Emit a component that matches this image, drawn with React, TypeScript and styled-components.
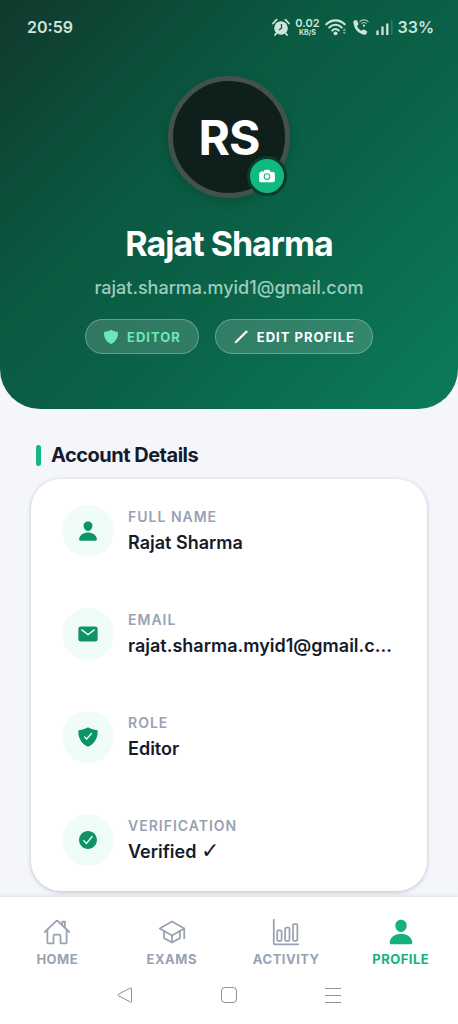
import React from "react";
import styled, { createGlobalStyle } from "styled-components";
import {
  IoBarChartOutline,
  IoCamera,
  IoCheckmarkCircle,
  IoHomeOutline,
  IoMail,
  IoPerson,
  IoSchoolOutline,
  IoShield,
  IoShieldCheckmark,
} from "react-icons/io5";

const GlobalStyle = createGlobalStyle`
  *, *::before, *::after { box-sizing: border-box; }
  body {
    margin: 0;
    background: #f4f6fb;
    color: #151b2b;
    font-family: Inter, "Liberation Sans", "DejaVu Sans", sans-serif;
  }
  h1, h2, p, dl, dt, dd { margin: 0; }
  button { font: inherit; cursor: pointer; }
  svg { display: block; flex: none; }
`;

const Screen = styled.div`
  display: flex;
  flex-direction: column;
  min-height: 100vh;
`;

const Hero = styled.header`
  display: flex;
  flex-direction: column;
  align-items: center;
  padding-bottom: 55px;
  border-radius: 0 0 40px 40px;
  background: linear-gradient(135deg, #10392d 0%, #0a5a42 38%, #0a6348 60%, #0c7c59 100%);
`;

const StatusBar = styled.div`
  display: flex;
  align-items: center;
  justify-content: space-between;
  align-self: stretch;
  height: 54px;
  padding: 0 24px 0 27px;
  color: #cfe5da;
  font-size: 16px;
  font-weight: 600;
`;

const StatusIcons = styled.div`
  display: flex;
  align-items: center;
  gap: 5px;
`;

const DataRate = styled.div`
  display: flex;
  flex-direction: column;
  align-items: center;
  font-size: 11px;
  line-height: 12px;
`;

const DataUnit = styled.span`
  font-size: 7px;
  line-height: 8px;
  font-weight: 700;
`;

const Avatar = styled.div`
  position: relative;
  display: flex;
  align-items: center;
  justify-content: center;
  width: 122px;
  height: 122px;
  margin-top: 22px;
  border: 5px solid #41524c;
  border-radius: 50%;
  background: #0f1f1b;
  box-shadow: 0 4px 12px rgba(0, 0, 0, 0.16);
  color: #fff;
  font-size: 48px;
  font-weight: 700;
  letter-spacing: -1px;
`;

const CameraButton = styled.button`
  position: absolute;
  right: -2px;
  bottom: -3px;
  display: flex;
  align-items: center;
  justify-content: center;
  width: 40px;
  height: 40px;
  padding: 0;
  border: 3px solid #0b3a2d;
  border-radius: 50%;
  background: #10b981;
  color: #fff;
`;

const Name = styled.h1`
  margin-top: 26px;
  color: #fff;
  font-size: 34px;
  line-height: 40px;
  font-weight: 700;
  letter-spacing: -1px;
`;

const HeroEmail = styled.p`
  margin-top: 12px;
  color: #9fcdbb;
  font-size: 18px;
  line-height: 24px;
  font-weight: 500;
`;

const Pills = styled.div`
  display: flex;
  gap: 16px;
  margin-top: 19px;
`;

const pill = `
  display: flex;
  align-items: center;
  gap: 8px;
  height: 35px;
  padding: 0 17px;
  border: 1px solid rgba(255, 255, 255, 0.26);
  border-radius: 18px;
  background: rgba(255, 255, 255, 0.16);
  font-size: 13px;
  font-weight: 700;
  letter-spacing: 1px;
`;

const RolePill = styled.span`
  ${pill}
  color: #6ee7b7;
`;

const EditButton = styled.button`
  ${pill}
  color: #fff;
`;

const Content = styled.main`
  padding: 34px 31px 6px;
`;

const SectionTitle = styled.h2`
  display: flex;
  align-items: center;
  gap: 10px;
  padding-left: 5px;
  font-size: 20px;
  line-height: 24px;
  font-weight: 700;
  letter-spacing: -0.5px;

  &::before {
    content: "";
    width: 5px;
    height: 21px;
    border-radius: 3px;
    background: #10b981;
  }
`;

const Card = styled.dl`
  display: flex;
  flex-direction: column;
  gap: 51px;
  margin-top: 12px;
  padding: 26px 31px 25px;
  border-radius: 30px;
  background: #fff;
  box-shadow: 0 1px 4px rgba(15, 30, 40, 0.24);
`;

const DetailRow = styled.div`
  display: grid;
  grid-template-columns: 52px minmax(0, 1fr);
  column-gap: 14px;
  align-items: center;
`;

const DetailIcon = styled.span`
  display: flex;
  align-items: center;
  justify-content: center;
  grid-row: span 2;
  width: 52px;
  height: 52px;
  border-radius: 50%;
  background: #effdf6;
  color: #0c9468;
`;

const DetailLabel = styled.dt`
  align-self: end;
  color: #98a2b3;
  font-size: 14px;
  line-height: 24px;
  font-weight: 600;
  letter-spacing: 1px;
`;

const DetailValue = styled.dd`
  grid-column: 2;
  align-self: start;
  overflow: hidden;
  font-size: 18px;
  line-height: 28px;
  font-weight: 600;
  text-overflow: ellipsis;
  white-space: nowrap;
`;

const Tick = styled.span`
  font-family: "DejaVu Sans", sans-serif;
  font-size: 22px;
  line-height: 24px;
`;

const BottomBar = styled.footer`
  position: sticky;
  bottom: 0;
  margin-top: auto;
  height: 127px;
  padding-top: 21px;
  background: #fff;
  box-shadow: 0 -1px 4px rgba(15, 80, 60, 0.14);
`;

const Tabs = styled.nav`
  display: grid;
  grid-template-columns: repeat(4, 1fr);
`;

const Tab = styled.a<{ $active?: boolean }>`
  display: flex;
  flex-direction: column;
  align-items: center;
  gap: 3px;
  color: ${(p) => (p.$active ? "#16b27c" : "#98a2b3")};
  font-size: 13px;
  line-height: 20px;
  font-weight: 700;
  letter-spacing: 0.5px;
  text-decoration: none;
`;

const SystemKeys = styled.div`
  display: flex;
  justify-content: center;
  gap: 86px;
  margin-top: 17px;
`;

const SystemKey = styled.button`
  padding: 0;
  border: 0;
  background: none;
  color: #8d9096;
`;

const AlarmIcon = () => (
  <svg width="18" height="18" viewBox="0 0 18 18" aria-hidden="true">
    <circle cx="9" cy="10" r="6.8" fill="currentColor" />
    <path d="M1 5.500 4.600 1.600M17 5.500l-3.600-3.900M4.500 15l-1.500 2M13.500 15l1.500 2" stroke="currentColor" strokeWidth="1.800" strokeLinecap="round" />
    <path d="M9.500 6v4.200L7 12" fill="none" stroke="#0b523d" strokeWidth="1.300" />
  </svg>
);

const WifiIcon = () => (
  <svg width="22" height="18" viewBox="0 0 22 18" aria-hidden="true">
    <g fill="none" stroke="currentColor" strokeWidth="2.100" strokeLinecap="round">
      <path d="M1.300 6.300c5.200-5.300 13.200-5.300 18.400 0" />
      <path d="M4.300 9.500c3.600-3.600 8.800-3.600 12.400 0" />
      <path d="M7.300 12.500c2-1.900 4.400-1.900 6.400 0" />
    </g>
    <circle cx="10.500" cy="15.300" r="1.900" fill="currentColor" />
    <path d="M17.500 12.800 19.300 10.600 21 12.800zM17.500 14.200h3.500L19.300 16z" fill="currentColor" opacity=".7" />
  </svg>
);

const CallIcon = () => (
  <svg width="18" height="18" viewBox="0 0 18 18" aria-hidden="true">
    <path d="M2.300 2.600 4.800 2l1.900 4.200-1.700 1.700c.9 2.200 2.400 3.800 4.700 4.900l1.900-1.500 3.700 2.300-.8 2.200c-.4.700-1.200 1-2 .9C6.500 15.900 1.900 11 1.400 4.500c-.1-.9.200-1.600.9-1.900z" fill="currentColor" />
    <g fill="none" stroke="currentColor" strokeWidth="1.100" opacity=".75">
      <path d="M7.500 3.800c2.600-2.600 6.400-2.600 9 0" />
      <path d="M9.400 5.700c1.600-1.500 3.600-1.500 5.200 0" />
    </g>
    <circle cx="12" cy="7.600" r="1.100" fill="currentColor" />
  </svg>
);

const SignalIcon = () => (
  <svg width="18" height="18" viewBox="0 0 18 18" aria-hidden="true">
    <path d="M2.500 12.500v4.500M7.500 8.500v8.500M12.300 5.500V17" stroke="currentColor" strokeWidth="2.300" />
    <path d="M16.800 1.500V17" stroke="currentColor" strokeWidth="1.600" opacity=".2" />
  </svg>
);

const BackIcon = () => (
  <svg width="18" height="18" viewBox="0 0 18 18" fill="none" stroke="currentColor" aria-hidden="true">
    <path d="M15.500 2.500v13q0 1-1 .5L2.500 9.800q-1-.8 0-1.600L14.500 2q1-.500 1 .5z" />
  </svg>
);

const HomeKeyIcon = () => (
  <svg width="18" height="18" viewBox="0 0 18 18" fill="none" stroke="currentColor" aria-hidden="true">
    <rect x="1.500" y="1.500" width="15" height="15" rx="3.500" />
  </svg>
);

const MenuIcon = () => (
  <svg width="18" height="18" viewBox="0 0 18 18" stroke="currentColor" aria-hidden="true">
    <path d="M1 2.500h16M1 9.500h16M1 16.500h16" />
  </svg>
);

const PenIcon = () => (
  <svg width="16" height="16" viewBox="0 0 16 16" aria-hidden="true">
    <path d="M2 14 3 11.800 12.300 2.500l1.200 1.200L4.200 13z" fill="currentColor" stroke="currentColor" strokeWidth=".800" strokeLinejoin="round" />
    <path d="M13 1.800 14.200 3" stroke="currentColor" strokeWidth="1.200" strokeLinecap="round" />
  </svg>
);

const details: { label: string; value: React.ReactNode; Icon: typeof IoPerson }[] = [
  { label: "FULL NAME", value: "Rajat Sharma", Icon: IoPerson },
  { label: "EMAIL", value: "rajat.sharma.myid1@gmail.com", Icon: IoMail },
  { label: "ROLE", value: "Editor", Icon: IoShieldCheckmark },
  { label: "VERIFICATION", value: <>Verified <Tick>✓</Tick></>, Icon: IoCheckmarkCircle },
];

const tabs = [
  { label: "HOME", Icon: IoHomeOutline },
  { label: "EXAMS", Icon: IoSchoolOutline },
  { label: "ACTIVITY", Icon: IoBarChartOutline },
  { label: "PROFILE", Icon: IoPerson, active: true },
];

export default function App() {
  return (
    <>
      <GlobalStyle />
      <Screen>
        <Hero>
          <StatusBar>
            <span>20:59</span>
            <StatusIcons>
              <AlarmIcon />
              <DataRate>
                <span>0.02</span>
                <DataUnit>KB/S</DataUnit>
              </DataRate>
              <WifiIcon />
              <CallIcon />
              <SignalIcon />
              <span>33%</span>
            </StatusIcons>
          </StatusBar>
          <Avatar>
            RS
            <CameraButton type="button" aria-label="Change photo">
              <IoCamera size={18} />
            </CameraButton>
          </Avatar>
          <Name>Rajat Sharma</Name>
          <HeroEmail>rajat.sharma.myid1@gmail.com</HeroEmail>
          <Pills>
            <RolePill>
              <IoShield size={16} />
              EDITOR
            </RolePill>
            <EditButton type="button">
              <PenIcon />
              EDIT PROFILE
            </EditButton>
          </Pills>
        </Hero>
        <Content>
          <SectionTitle>Account Details</SectionTitle>
          <Card>
            {details.map(({ label, value, Icon }) => (
              <DetailRow key={label}>
                <DetailIcon>
                  <Icon size={22} />
                </DetailIcon>
                <DetailLabel>{label}</DetailLabel>
                <DetailValue>{value}</DetailValue>
              </DetailRow>
            ))}
          </Card>
        </Content>
        <BottomBar>
          <Tabs>
            {tabs.map(({ label, Icon, active }) => (
              <Tab key={label} href={`#${label.toLowerCase()}`} $active={active} aria-current={active ? "page" : undefined}>
                <Icon size={28} />
                {label}
              </Tab>
            ))}
          </Tabs>
          <SystemKeys>
            <SystemKey type="button" aria-label="Back">
              <BackIcon />
            </SystemKey>
            <SystemKey type="button" aria-label="Home screen">
              <HomeKeyIcon />
            </SystemKey>
            <SystemKey type="button" aria-label="Recent apps">
              <MenuIcon />
            </SystemKey>
          </SystemKeys>
        </BottomBar>
      </Screen>
    </>
  );
}
